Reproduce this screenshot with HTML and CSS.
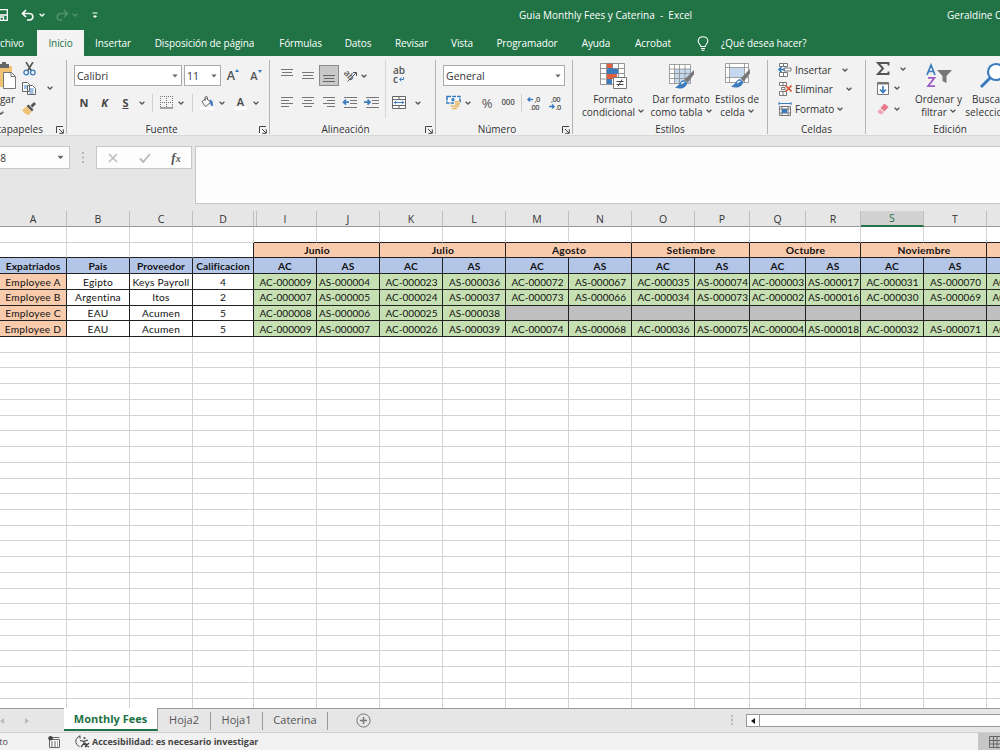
FILE: index.html
```html
<!DOCTYPE html>
<html lang="es">
<head>
<meta charset="utf-8">
<title>Guia Monthly Fees y Caterina - Excel</title>
<link rel="stylesheet" href="styles.css">
</head>
<body>
<svg class="defs" width="0" height="0">
  <symbol id="chev" viewBox="0 0 6 4"><path d="M.6.8 3 3 5.4.8" fill="none" stroke="currentColor" stroke-width="1.300"/></symbol>
  <symbol id="tri" viewBox="0 0 6 4"><path d="M.4.6h5.2L3 3.5z" fill="#666"/></symbol>
  <symbol id="launch" viewBox="0 0 8 8"><path d="M.5 7V.5H7M3 3l4 4M7.300 3.300v4h-4" fill="none" stroke="#444"/></symbol>
  <symbol id="brush" viewBox="0 0 20 20"><path d="M19 1 10 10l3 3 6-8z" fill="#777"/><path d="M9.500 10.500C5 11 6 16 1 17.500c5 2.500 11 .5 11.500-4.500z" fill="#3a7cbd"/><path d="M7 14.500c1-2 2-2 3-1.500" stroke="#fff" stroke-width="1.200" fill="none"/></symbol>
</svg>
<div class="app">
  <header class="title">
    <svg class="save" width="8" height="12" viewBox="0 0 8 12"><path d="M0 .7h7.300v10.600H0M0 6h7M0 11V8h3.500v3" fill="none" stroke="#fff" stroke-width="1.300"/></svg>
    <svg class="undo" width="14" height="13" viewBox="0 0 14 13"><path d="M5 1 1.500 4.500 5 8M2 4.500h6c5 0 5 6.500.5 6.500H6" fill="none" stroke="#fff" stroke-width="1.700"/></svg>
    <svg class="chev white" width="6" height="4"><use href="#chev"/></svg>
    <svg class="redo" width="14" height="13" viewBox="0 0 14 13"><path d="M9 1l3.500 3.500L9 8M12 4.500H6C1 4.500 1 11 5.500 11H7" fill="none" stroke="#529370" stroke-width="1.500"/></svg>
    <svg class="chev dim" width="6" height="4"><use href="#chev"/></svg>
    <svg class="qat" width="6" height="7" viewBox="0 0 6 7"><path d="M.5 1h5M1.500 4h3L3 5.500z" fill="#fff" stroke="#fff"/></svg>
    <span class="doc">Guia Monthly Fees y Caterina&nbsp; -&nbsp; Excel</span>
    <span class="user">Geraldine Ortiz</span>
  </header>
  <nav class="tabs">
    <span class="first">Archivo</span><span class="on">Inicio</span><span>Insertar</span><span>Disposición de página</span><span>Fórmulas</span><span>Datos</span><span>Revisar</span><span>Vista</span><span>Programador</span><span>Ayuda</span><span>Acrobat</span>
    <svg width="12" height="15" viewBox="0 0 12 15"><path d="M3.800 10.500C3.800 8.500 1.200 7.800 1.200 5a4.800 4.300 0 0 1 9.600 0c0 2.800-2.600 3.500-2.600 5.500zM4 12.500h4M4.500 14.200h3" fill="none" stroke="#fff" stroke-width="1.100"/></svg>
    <span class="ask">¿Qué desea hacer?</span>
  </nav>

  <section class="ribbon">
    <div class="group g-clip">
      <div class="body">
        <div class="paste">
          <svg width="16" height="28" viewBox="0 0 16 28"><path d="M0 4h12v21H0z" fill="#efc275"/><path d="M0 2h2V0h4v2h3v4H0z" fill="#666"/><path d="M3.500 10.500h8l4 4v12h-12z" fill="#fff" stroke="#777"/><path d="M11 10.500v4h4" fill="none" stroke="#777"/></svg>
          <span>Pegar</span>
          <svg class="chev" width="6" height="4"><use href="#chev"/></svg>
        </div>
        <div class="cliptools">
          <svg width="13" height="14" viewBox="0 0 13 14"><path d="M3 0l5.500 9M10 0 4.500 9" stroke="#555" stroke-width="1.600"/><circle cx="3.200" cy="10.500" r="2.300" fill="none" stroke="#3a7cbd" stroke-width="1.300"/><circle cx="9.800" cy="10.500" r="2.300" fill="none" stroke="#3a7cbd" stroke-width="1.300"/></svg><i></i>
          <svg width="14" height="13" viewBox="0 0 14 13"><path d="M.5.5h5l2 2v7h-7zM5.500 3.500h5l3 3v6h-8z" fill="#fff" stroke="#666"/><path d="M2 4h3M2 6h3M7.500 7h4M7.500 9h4M7.500 11h4" stroke="#3a7cbd"/></svg>
          <svg class="chev" width="6" height="4"><use href="#chev"/></svg>
          <svg width="14" height="13" viewBox="0 0 14 13"><path d="M0 8l4.500-3.500 5 5L7 13C4 12.500 2 11 0 8z" fill="#efc275"/><path d="M4.500 4 6.500 2.500l5 5L10 9.500zM8.500 3.500 12 0l2 2-3.500 3.500z" fill="#555"/></svg><i></i>
        </div>
      </div>
      <div class="label"><span>Portapapeles</span><svg width="8" height="8"><use href="#launch"/></svg></div>
    </div>

    <div class="group g-font">
      <div class="body">
        <div class="row r1">
          <div class="combo">Calibri<svg width="6" height="4"><use href="#tri"/></svg></div>
          <div class="combo">11<svg width="6" height="4"><use href="#tri"/></svg></div>
          <div class="size big">A<svg width="4" height="3" viewBox="0 0 4 3"><path d="M0 3 2 0l2 3z" fill="#3a7cbd"/></svg></div>
          <div class="size">A<svg width="4" height="3" viewBox="0 0 4 3"><path d="M0 0h4L2 3z" fill="#3a7cbd"/></svg></div>
        </div>
        <div class="row r2">
          <b>N</b><b class="it">K</b><b class="un">S</b><svg class="chev" width="6" height="4"><use href="#chev"/></svg><i class="bar"></i>
          <svg width="13" height="13" viewBox="0 0 13 13"><path d="M.5 0v12M6.500 0v12M12.500 0v12M0 .5h13M0 6.500h13" stroke="#777" stroke-dasharray="1 1"/><path d="M0 12h13" stroke="#555"/></svg>
          <svg class="chev" width="6" height="4"><use href="#chev"/></svg><i class="bar"></i>
          <svg width="14" height="14" viewBox="0 0 14 14"><path d="M0 11h14v3H0z" fill="#fff"/><path d="M2 5.500 6.500 2l4 4.500-5 4z" fill="#fff" stroke="#666"/><path d="M5 5V1.500C5 0 7.500 0 7.500 1.500V4" fill="none" stroke="#666"/><path d="M10 4c2.500.5 2.500 3 2.200 6-1.700-1-1.500-3-2.200-6z" fill="#3a7cbd" stroke="#3a7cbd"/></svg>
          <svg class="chev" width="6" height="4"><use href="#chev"/></svg><b class="color">A</b><svg class="chev" width="6" height="4"><use href="#chev"/></svg>
        </div>
      </div>
      <div class="label"><span>Fuente</span><svg width="8" height="8"><use href="#launch"/></svg></div>
    </div>

    <div class="group g-align">
      <div class="body">
        <div class="left">
          <div class="row r1">
            <svg width="12" height="14" viewBox="0 0 12 14"><path d="M0 .5h12M1 3.500h10M0 6.500h12" stroke="#777"/></svg>
            <svg width="12" height="14" viewBox="0 0 12 14"><path d="M0 3.500h12M1 6.500h10M0 9.500h12" stroke="#777"/></svg>
            <div class="pressed"><svg width="12" height="14" viewBox="0 0 12 14"><path d="M0 6.500h12M1 9.500h10M0 12.500h12" stroke="#666"/></svg></div>
            <svg width="15" height="15" viewBox="0 0 15 15"><text x="0" y="8" transform="rotate(45 3 7)" class="rot">ab</text><path d="M4.500 13.500 13 5M10 4.500h3.500v3.500" stroke="#555" fill="none"/></svg>
            <svg class="chev" width="6" height="4"><use href="#chev"/></svg>
          </div>
          <div class="row r2">
            <svg width="12" height="11" viewBox="0 0 12 11"><path d="M0 .5h12M0 3.500h8M0 6.500h12M0 9.500h8" stroke="#777"/></svg>
            <svg width="12" height="11" viewBox="0 0 12 11"><path d="M0 .5h12M2 3.500h8M0 6.500h12M2 9.500h8" stroke="#777"/></svg>
            <svg width="12" height="11" viewBox="0 0 12 11"><path d="M0 .5h12M4 3.500h8M0 6.500h12M4 9.500h8" stroke="#777"/></svg>
            <svg width="15" height="12" viewBox="0 0 15 12"><path d="M2 .5h13M8 3.500h7M8 6.500h7M2 10.500h13" stroke="#777"/><path d="M7 5.200H1.500M4 2.700 1.500 5.200 4 7.700" stroke="#3a7cbd" stroke-width="1.700" fill="none"/></svg>
            <svg width="15" height="12" viewBox="0 0 15 12"><path d="M2 .5h13M8 3.500h7M8 6.500h7M2 10.500h13" stroke="#777"/><path d="M0 5.200h5.500M3.500 2.700 6 5.200 3.500 7.700" stroke="#3a7cbd" stroke-width="1.700" fill="none"/></svg>
          </div>
        </div>
        <div class="right">
          <div class="wrap"><span>ab</span><span>c<svg width="5" height="5" viewBox="0 0 5 5"><path d="M4.500 0v2.500H1M2.500.5l-2 2 2 2" fill="none" stroke="#3a7cbd"/></svg></span></div>
          <div class="merge"><svg width="14" height="13" viewBox="0 0 14 13"><path d="M.5.5h13v12H.5zM.5 3.500h13M.5 9.500h13M7 .5v3M7 9.500v3" fill="#fff" stroke="#666"/><path d="M2 6.500h10M4 4.800 2.300 6.500 4 8.200M10 4.800l1.700 1.700L10 8.200" fill="none" stroke="#3a7cbd"/></svg><svg class="chev" width="6" height="4"><use href="#chev"/></svg></div>
        </div>
      </div>
      <div class="label"><span>Alineación</span><svg width="8" height="8"><use href="#launch"/></svg></div>
    </div>

    <div class="group g-num">
      <div class="body">
        <div class="row r1"><div class="combo">General<svg width="6" height="4"><use href="#tri"/></svg></div></div>
        <div class="row r2">
          <svg width="15" height="15" viewBox="0 0 15 15"><path d="M1 1.500h13v6.500H1z" fill="#fff" stroke="#3a7cbd" stroke-width="1.600" stroke-dasharray="4 1"/><circle cx="7" cy="4.700" r="1.700" fill="#3a7cbd"/><path d="M8 6h6v8H8z" fill="#f2f2f2"/><path d="M9 6.800h5M9 9h5M8 11.200h5M4.500 11h3M6 13.400h5" stroke="#e9b25e" stroke-width="1.500"/></svg>
          <svg class="chev" width="6" height="4"><use href="#chev"/></svg>
          <span class="pct">%</span><span class="thou">000</span><i class="bar"></i>
          <svg class="dec" width="14" height="14" viewBox="0 0 14 14"><path d="M6 3.500H1M3 1.500l-2 2 2 2" stroke="#3a7cbd" fill="none" stroke-width="1.400"/><text x="7.500" y="6">,0</text><text x="3" y="13.500">,00</text></svg>
          <svg class="dec" width="14" height="14" viewBox="0 0 14 14"><path d="M1 10.500h5M4 8.500l2 2-2 2" stroke="#3a7cbd" fill="none" stroke-width="1.400"/><text x="3" y="6">,00</text><text x="7.500" y="13.500">,0</text></svg>
        </div>
      </div>
      <div class="label"><span>Número</span><svg width="8" height="8"><use href="#launch"/></svg></div>
    </div>

    <div class="group g-styles">
      <div class="body">
        <div class="tall"><svg width="28" height="28" viewBox="0 0 28 28"><path d="M1.500 1.500h24v21h-24z" fill="#fff"/><path d="M8 1h6v5H8zM8 12h10v5H8z" fill="#e0603c"/><path d="M8 6h11v6H8zM8 17h5v5H8z" fill="#3a7cbd"/><path d="M1.500 1.500h24v21h-24zM1.500 6.500h6M14 6.500h11M1.500 11.500h6M19 11.500h6M1.500 17h6M18 17h7M7.500 1v21M13.500 1v5M19.500 1v21" fill="none" stroke="#8a8a8a" stroke-width=".9"/><path d="M14.500 15.500h13v11h-13z" fill="#fff" stroke="#777"/><path d="M17.500 19.500h7M17.500 22.500h7M23 17.500l-4 7" stroke="#444"/></svg><span>Formato</span><span>condicional <svg class="chev" width="6" height="4"><use href="#chev"/></svg></span></div>
        <div class="tall"><svg width="28" height="28" viewBox="0 0 28 28"><path d="M2.500 2.500h21v19h-21z" fill="#fff"/><path d="M8 7h15v14H8z" fill="#c5d9ee"/><path d="M2.500 2.500h21v19h-21zM2.500 7h21M2.500 11.500h21M2.500 16.500h21M7.500 2.500v19M12.500 2.500v19M18 2.500v19" fill="none" stroke="#8a8a8a" stroke-width=".8"/><svg x="7" y="7" width="21" height="21"><use href="#brush"/></svg></svg><span>Dar formato</span><span>como tabla <svg class="chev" width="6" height="4"><use href="#chev"/></svg></span></div>
        <div class="tall"><svg width="28" height="28" viewBox="0 0 28 28"><path d="M2.500 1.500h23v19h-23z" fill="#fff"/><path d="M7 6h14v9H7z" fill="#c5d9ee"/><path d="M2.500 1.500h23v19h-23zM2.500 5.500h23M2.500 15.500h23M6.500 1.500v19M21.500 1.500v19" fill="none" stroke="#8a8a8a" stroke-width=".8"/><svg x="7" y="6" width="21" height="21"><use href="#brush"/></svg></svg><span>Estilos de</span><span>celda <svg class="chev" width="6" height="4"><use href="#chev"/></svg></span></div>
      </div>
      <div class="label"><span>Estilos</span></div>
    </div>

    <div class="group g-cells">
      <div class="body">
        <div class="cmd c1"><svg width="14" height="14" viewBox="0 0 14 14"><path d="M1.500.5h8v3h-8zM1.500 9.500h8v4h-8zM5.500 0v3.500M5.500 9.500v4M6 5h7v3H6z" fill="#fff" stroke="#777"/><path d="M7 6.500H1M3.500 4 1 6.500 3.500 9" fill="none" stroke="#3a7cbd" stroke-width="1.600"/></svg><span>Insertar</span><svg class="chev" width="6" height="4"><use href="#chev"/></svg></div>
        <div class="cmd c2"><svg width="14" height="14" viewBox="0 0 14 14"><path d="M1.500.5h7v3h-7zM1.500 9.500h7v4h-7zM5 0v3.500M5 9.500v4M3.500 5.500H7v2H3.500z" fill="#fff" stroke="#777"/><path d="M7.500 3.500l6 6M13.500 3.500l-6 6" stroke="#d95335" stroke-width="1.600"/></svg><span>Eliminar</span><svg class="chev" width="6" height="4"><use href="#chev"/></svg></div>
        <div class="cmd c3"><svg width="14" height="14" viewBox="0 0 14 14"><path d="M1 1.500h12M1 0v3M13 0v3" stroke="#3a7cbd"/><path d="M1.500 4.500h11v9h-11zM1.500 7h11M1.500 11h11M4 4.500v9M10 4.500v9" fill="#fff" stroke="#777"/><path d="M4 7h5v4H4z" fill="#3a7cbd"/></svg><span>Formato</span><svg class="chev" width="6" height="4"><use href="#chev"/></svg></div>
      </div>
      <div class="label"><span>Celdas</span></div>
    </div>

    <div class="group g-edit">
      <div class="body">
        <div class="tools">
          <svg width="14" height="13" viewBox="0 0 14 13"><path d="M12.500 3.500V1H2l5 5.500L2 12h10.500V9.500" fill="none" stroke="#555" stroke-width="1.900"/></svg><svg class="chev far" width="6" height="4"><use href="#chev"/></svg>
          <svg width="12" height="13" viewBox="0 0 12 13"><path d="M.5.5h11v12H.5z" fill="#fff" stroke="#777"/><path d="M.5 1.500h11" stroke="#777" stroke-width="2"/><path d="M6 4v6.500M3 7.500l3 3 3-3" fill="none" stroke="#3a7cbd" stroke-width="1.700"/></svg><svg class="chev" width="6" height="4"><use href="#chev"/></svg>
          <svg width="12" height="12" viewBox="0 0 12 12"><path d="M7.500.5l4 3.500-4 4.500-4-3.500z" fill="#e8788d"/><path d="M2.800 5.700l4 3.500L5 11.300H3L.5 9z" fill="#f1a5b2"/></svg><svg class="chev" width="6" height="4"><use href="#chev"/></svg>
        </div>
        <div class="tall sort"><svg width="26" height="28" viewBox="0 0 26 28"><path d="M1 13 5 3l4 10M2.300 9.500h5.400" fill="none" stroke="#3a7cbd" stroke-width="1.700"/><path d="M2 15.800h6.500L2 24.200h7" fill="none" stroke="#9a5bc4" stroke-width="1.700"/><path d="M11 8h15l-5.500 6v7l-4-2v-5z" fill="#777"/></svg><span>Ordenar y</span><span>filtrar <svg class="chev" width="6" height="4"><use href="#chev"/></svg></span></div>
        <div class="tall find"><svg width="28" height="28" viewBox="0 0 28 28"><circle cx="17" cy="10" r="8" fill="#fff" stroke="#3a7cbd" stroke-width="2.200"/><path d="M11 16 2 25" stroke="#3a7cbd" stroke-width="3"/></svg><span>Buscar y</span><span>seleccionar</span></div>
      </div>
      <div class="label"><span>Edición</span></div>
    </div>
  </section>

  <section class="formula">
    <div class="namebox"><span>S8</span><svg width="7" height="5" viewBox="0 0 6 4"><use href="#tri"/></svg></div>
    <svg class="dots" width="2" height="11" viewBox="0 0 2 11"><path d="M0 1h2M0 5.500h2M0 10h2" stroke="#aaa" stroke-width="1.500"/></svg>
    <div class="fx">
      <svg width="10" height="10" viewBox="0 0 10 10"><path d="M1 1l8 8M9 1 1 9" stroke="#bbb" stroke-width="1.500"/></svg>
      <svg width="12" height="10" viewBox="0 0 12 10"><path d="M1 5.500 4.200 9 11 1" fill="none" stroke="#bbb" stroke-width="1.900"/></svg>
      <em>f<small>x</small></em>
    </div>
    <div class="input"></div>
  </section>

  <main class="sheet" id="sheet"></main>

  <section class="sheets">
    <div class="arrows"><svg width="4" height="6" viewBox="0 0 4 6"><path d="M4 0v6L0 3z" fill="#bbb"/></svg><svg width="4" height="6" viewBox="0 0 4 6"><path d="M0 0v6l4-3z" fill="#bbb"/></svg></div>
    <span class="tab active">Monthly Fees</span><span class="tab t2">Hoja2</span><span class="tab t3">Hoja1</span><span class="tab t4">Caterina</span>
    <svg class="plus" width="15" height="15" viewBox="0 0 15 15"><circle cx="7.500" cy="7.500" r="6.600" fill="none" stroke="#777"/><path d="M7.500 4v7M4 7.500h7" stroke="#777" stroke-width="1.500"/></svg>
    <svg class="dots" width="2" height="11" viewBox="0 0 2 11"><path d="M0 1h2M0 5h2M0 9h2" stroke="#aaa" stroke-width="1.500"/></svg>
    <div class="scroll"><div class="arrow"><svg width="4" height="6" viewBox="0 0 4 6"><path d="M4 0v6L0 3z" fill="#111"/></svg></div></div>
  </section>

  <footer class="status">
    <span class="ready">Listo</span>
    <svg width="12" height="12" viewBox="0 0 12 12"><path d="M1.500 3.500h10v8h-10zM4 1.500h7.500" fill="#fff" stroke="#666"/><circle cx="2.500" cy="2.300" r="2.200" fill="#444"/><path d="M3 6h7M3 8h7M3 10h7" stroke="#666" stroke-dasharray="2 1"/></svg>
    <svg class="acc" width="15" height="13" viewBox="0 0 15 13"><path d="M5 1C-.5 3-.5 9.500 4.500 11.500M5 .5v3.200" fill="none" stroke="#444"/><circle cx="9.500" cy="3" r="1.100" fill="#444"/><path d="M5 5.500l4 .8 4-1.300M9 6v2.500L6 12M9.500 8.500l2.500 3.500M10 8l4 4M14 8l-4 4" fill="none" stroke="#444" stroke-width="1.200"/></svg>
    <b>Accesibilidad: es necesario investigar</b>
    <div class="view"><svg width="12" height="12" viewBox="0 0 12 12"><path d="M.5.5H12M.5 4.500H12M.5 8H12M.5 11.500H12M.5.5v11M4.500.5v11M8 .5v11M11.500.5v11" stroke="#666"/></svg></div>
  </footer>
</div>
<script src="sheet.js"></script>
</body>
</html>
```
FILE: styles.css
```css
* { box-sizing: border-box; }
body { margin: 0; font-family: "Open Sans", "Noto Sans", sans-serif; font-size: 10px; color: #333; }
svg { display: block; flex: none; }
.defs { position: absolute; }
.app { width: 1000px; height: 750px; overflow: hidden; display: flex; flex-direction: column; background: #e6e6e6; white-space: nowrap; }
.chev { color: #555; }
.chev.white { color: #fff; }
.chev.dim { color: #529370; }

.title { height: 30px; background: #217346; color: #fff; display: flex; align-items: center; flex: none; }
.save { margin-right: 13px; }
.undo { margin-right: 4px; }
.redo { margin: 0 3px 0 10px; }
.qat { margin-left: 14px; }
.doc { margin-left: 421px; width: 428px; flex: none; letter-spacing: 0; }
.user { letter-spacing: 0; }

.tabs { height: 26px; background: #217346; color: #fff; flex: none; display: grid; grid-template-columns: 24px 13px 47px 58px 125px 67px 48px 59px 42px 88px 50px 64px 36px auto; align-items: center; text-align: center; letter-spacing: -.1px; }
.tabs .first { display: flex; justify-content: flex-end; }
.tabs .on { grid-column: 3; height: 26px; line-height: 26px; background: #f3f3f3; color: #217346; }
.tabs svg { margin-left: 12px; }
.tabs .ask { text-align: left; }

.ribbon { height: 80px; background: #f2f2f2; border-bottom: 1px solid #d8d8d8; display: flex; flex: none; }
.group { margin-top: 4px; height: 74px; flex: none; border-right: 1px solid #b4b4b4; display: flex; flex-direction: column; }
.body { height: 62px; flex: none; }
.label { height: 14px; line-height: 14px; display: flex; justify-content: center; position: relative; flex: none; }
.label svg { position: absolute; right: 2px; top: 4px; }
.row { display: grid; align-items: center; justify-items: center; }
.r1 { height: 31px; }
.r2 { height: 23px; }
.combo { height: 21px; width: 100%; border: 1px solid #ababab; background: #fff; display: flex; align-items: center; justify-content: space-between; padding: 0 3px 0 2px; font-size: 10.5px; }
.bar { width: 1px; height: 18px; background: #d0d0d0; }
.tall { display: flex; flex-direction: column; align-items: center; line-height: 13px; padding-top: 2px; }
.tall svg:first-child { margin-bottom: 3px; }
.tall span { display: flex; align-items: center; gap: 3px; }

.g-clip { width: 67px; }
.g-clip .body { display: flex; }
.paste { width: 22px; display: flex; flex-direction: column; align-items: flex-start; padding-top: 2px; }
.paste span { width: 15px; display: flex; justify-content: flex-end; line-height: 18px; }
.paste .chev { margin-left: -2px; margin-top: 3px; }
.cliptools { display: grid; grid-template-columns: 14px 17px; grid-template-rows: 17px 22px 18px; align-items: center; justify-items: end; align-content: start; }
.g-clip .label { justify-content: flex-end; padding-right: 23px; }

.g-font { width: 203px; padding-left: 7px; }
.g-font .r1 { grid-template-columns: 108px 2px 37px 24px 22px; }
.g-font .combo:nth-child(2) { grid-column: 3; }
.g-font .r2 { grid-template-columns: 20px 21px 21px 11px 10px 18px 12px 10px 19px 12px 25px 6px; font-size: 11px; color: #444; }
.it { font-style: italic; }
.un { text-decoration: underline; }
.color { line-height: 11px; border-bottom: 3px solid #fff; padding: 0 3px; font-weight: 600; }
.size { display: flex; font-size: 11px; font-weight: 600; color: #555; }
.size.big { font-size: 12.5px; }
.size svg { margin-top: 2px; }
.g-font .label { padding-right: 20px; }

.g-align { width: 166px; padding-left: 6px; }
.g-align .body { display: flex; }
.left { width: 110px; border-right: 1px solid #d6d6d6; height: 58px; }
.left .row { grid-template-columns: 21px 21px 21px 22px 6px; }
.left .r2 { grid-template-columns: 21px 21px 21px 21px 22px; }
.pressed { width: 20px; height: 21px; border: 1px solid #8c8c8c; background: #c9c9c9; display: grid; place-items: center; }
.rot { font: 600 9px "Open Sans", sans-serif; fill: #555; }
.right { padding-left: 6px; }
.wrap { height: 31px; padding: 6px 0 0 1px; font-weight: 600; line-height: 9px; display: flex; flex-direction: column; color: #555; }
.wrap span { display: flex; align-items: center; gap: 1px; }
.merge { height: 23px; display: flex; align-items: center; gap: 9px; }
.g-align .label { padding-right: 20px; }

.g-num { width: 137px; padding-left: 7px; }
.g-num .combo { width: 122px; }
.g-num .r1 { justify-items: start; }
.g-num .r2 { grid-template-columns: 20px 10px 28px 14px 12px 14px 28px; }
.pct { font-size: 13px; color: #555; }
.thou { font-size: 8px; font-weight: 600; color: #555; letter-spacing: -.2px; padding-bottom: 2px; }
.dec text { font: 600 7.5px "Open Sans", sans-serif; fill: #555; letter-spacing: -.5px; }
.g-num .label { padding-right: 21px; }

.g-styles { width: 195px; }
.g-styles .body { display: grid; grid-template-columns: 70px 66px 46px; padding-left: 5px; }
.g-cells { width: 98px; }
.g-cells .body { padding: 0 0 0 10px; }
.cmd { height: 20px; display: flex; align-items: center; gap: 3px; letter-spacing: -.05px; }
.g-cells .body .cmd:first-child { height: 19px; }
.cmd .chev { margin-left: auto; }
.c1 { width: 70px; } .c2 { width: 74px; } .c3 { width: 65px; }
.g-edit { width: 168px; border-right: 0; }
.g-edit .body { display: flex; }
.tools { width: 43px; flex: none; padding-left: 10px; display: grid; grid-template-columns: 14px 19px; grid-template-rows: 17px 22px 19px; align-items: center; justify-items: center; }
.tools .chev { margin-right: 5px; }
.tools .far { margin: 0 0 0 7px; }
.sort { width: 59px; flex: none; }
.find { width: 68px; flex: none; margin-left: -10px; }
.find svg:first-child { margin-left: 2px; }
.find span { letter-spacing: .1px; }

.formula { height: 75px; flex: none; display: flex; padding-top: 10px; }
.namebox { width: 70px; height: 23px; flex: none; background: #fdfdfd; border: 1px solid #c6c6c6; border-left: 0; display: flex; align-items: center; padding-right: 5px; justify-content: space-between; }
.namebox span { width: 6px; display: flex; justify-content: flex-end; }
.formula .dots { margin: 6px 13px 0 12px; }
.fx { width: 96px; height: 23px; flex: none; margin-left: -1px; border: 1px solid #c6c6c6; background: #fdfdfd; display: grid; grid-template-columns: 32px 32px 30px; align-items: center; justify-items: center; }
.fx em { font: italic bold 13px "Liberation Serif", serif; color: #555; }
.fx small { font-size: 10px; }
.input { width: 808px; height: 58px; flex: none; margin-left: 3px; border: 1px solid #c6c6c6; background: #fdfdfd; }

.sheet { height: 497px; overflow: hidden; background: #fff; font: 10px Lato, "Open Sans", sans-serif; color: #111; flex: none; }
.line { display: grid; grid-template-columns: 67px 63px 63px 61px 63px 63px 63px 63px 63px 63px 63px 55px 56px 55px 63px 63px 63px; height: 15.72px; }
.cell { border: 0 solid #d2d2d2; border-width: 0 1px 1px 0; display: flex; align-items: center; justify-content: center; letter-spacing: .25px; font-size: 10.2px; }
.heads { height: 16px; background: #e6e6e6; }
.heads .cell { font: 10.5px "Open Sans", sans-serif; border-bottom-color: #9b9b9b; border-right-color: #bdbdbd; color: #333; letter-spacing: 0; }
.heads .gap { box-shadow: 2px 0 0 #e6e6e6, 3px 0 0 #bdbdbd; }
.heads .sel { background: #d2d2d2; color: #217346; border-bottom: 2px solid #217346; }
.dark { border-color: #222; }
.edge-r { border-right-color: #222; }
.edge-b { border-bottom-color: #222; }
.month { background: #f8cbad; grid-column: span 2; font-weight: bold; font-size: 10.3px; padding-left: 1px; }
.head { background: #b4c6e7; font-weight: bold; font-size: 10.2px; letter-spacing: .1px; }
.person { background: #f8cbad; }
.code { background: #c6e0b4; letter-spacing: .03px; font-size: 10px; padding-left: 1px; }
.near { justify-content: flex-start; padding-left: 2px; }
.none { background: #bfbfbf; }

.sheets { height: 24px; flex: none; border-top: 1px solid #999; display: flex; align-items: center; font-size: 11px; color: #555; }
.sheets > * { flex: none; }
.arrows { width: 64px; display: flex; gap: 21px; }
.tab { text-align: center; line-height: 16px; border-right: 1px solid #999; height: 18px; }
.active { width: 94px; height: 23px; line-height: 22px; margin-top: -1px; background: #fff; color: #1e7145; font-weight: bold; border-bottom: 2px solid #217346; align-self: flex-start; }
.t2 { width: 53px; } .t3 { width: 52px; } .t4 { width: 65px; }
.plus { margin-left: 28px; }
.sheets .dots { margin-left: 360px; }
.scroll { margin-left: 13px; width: 260px; height: 13px; border: 1px solid #999; background: #fff; }
.arrow { width: 13px; height: 11px; border-right: 1px solid #999; display: grid; place-items: center; }

.status { height: 18px; flex: none; border-top: 1px solid #d0d0d0; background: #f2f2f2; display: flex; align-items: center; font-size: 9px; color: #444; }
.ready { width: 8px; margin-right: 40px; display: flex; justify-content: flex-end; }
.acc { margin: 0 2px 0 15px; }
.view { width: 22px; height: 17px; background: #c6c6c6; margin-left: auto; padding: 3px 0 0 11px; overflow: hidden; }
```
FILE: sheet.js
```js
const sheet = document.getElementById('sheet');

function addLine(cells, extra = '') {
  const line = document.createElement('div');
  line.className = ('line ' + extra).trim();
  for (const [text, cls] of cells) {
    const cell = document.createElement('div');
    cell.className = ('cell ' + cls).trim();
    cell.textContent = text;
    line.append(cell);
  }
  sheet.append(line);
}

const letters = [...'ABCDIJKLMNOPQRSTU'];
addLine(letters.map(l => [l, l === 'S' ? 'sel' : l === 'D' ? 'gap' : '']), 'heads');

// Spacer row above the table
addLine(letters.map((l, i) => ['', i > 3 ? 'edge-b' : '']));

const months = ['Junio', 'Julio', 'Agosto', 'Setiembre', 'Octubre', 'Noviembre'];
addLine([
  ['', 'edge-b'], ['', 'edge-b'], ['', 'edge-b'], ['', 'edge-b edge-r'],
  ...months.map(m => [m, 'dark month']),
  ['', 'dark person'],
]);

addLine([
  ...['Expatriados', 'Pais', 'Proveedor', 'Calificacion'].map(t => [t, 'dark head']),
  ...Array.from({ length: 13 }, (_, i) => [i % 2 ? 'AS' : 'AC', 'dark head']),
]);

const people = [
  ['Employee A', 'Egipto', 'Keys Payroll', '4', '000009 000004 000023 000036 000072 000067 000035 000074 000003 000017 000031 000070 000033'],
  ['Employee B', 'Argentina', 'Itos', '2', '000007 000005 000024 000037 000073 000066 000034 000073 000002 000016 000030 000069 000032'],
  ['Employee C', 'EAU', 'Acumen', '5', '000008 000006 000025 000038'],
  ['Employee D', 'EAU', 'Acumen', '5', '000009 000007 000026 000039 000074 000068 000036 000075 000004 000018 000032 000071 000034'],
];
for (const [name, country, vendor, grade, list] of people) {
  const codes = list.split(' ');
  addLine([
    [name, 'dark person'], [country, 'dark'], [vendor, 'dark'], [grade, 'dark'],
    ...Array.from({ length: 13 }, (_, i) => codes[i]
      ? [(i % 2 ? 'AS-' : 'AC-') + codes[i], i === 1 ? 'dark code near' : 'dark code']
      : ['', 'dark none']),
  ]);
}

for (let n = 0; n < 24; n++) addLine(letters.map(() => ['', '']));
```
